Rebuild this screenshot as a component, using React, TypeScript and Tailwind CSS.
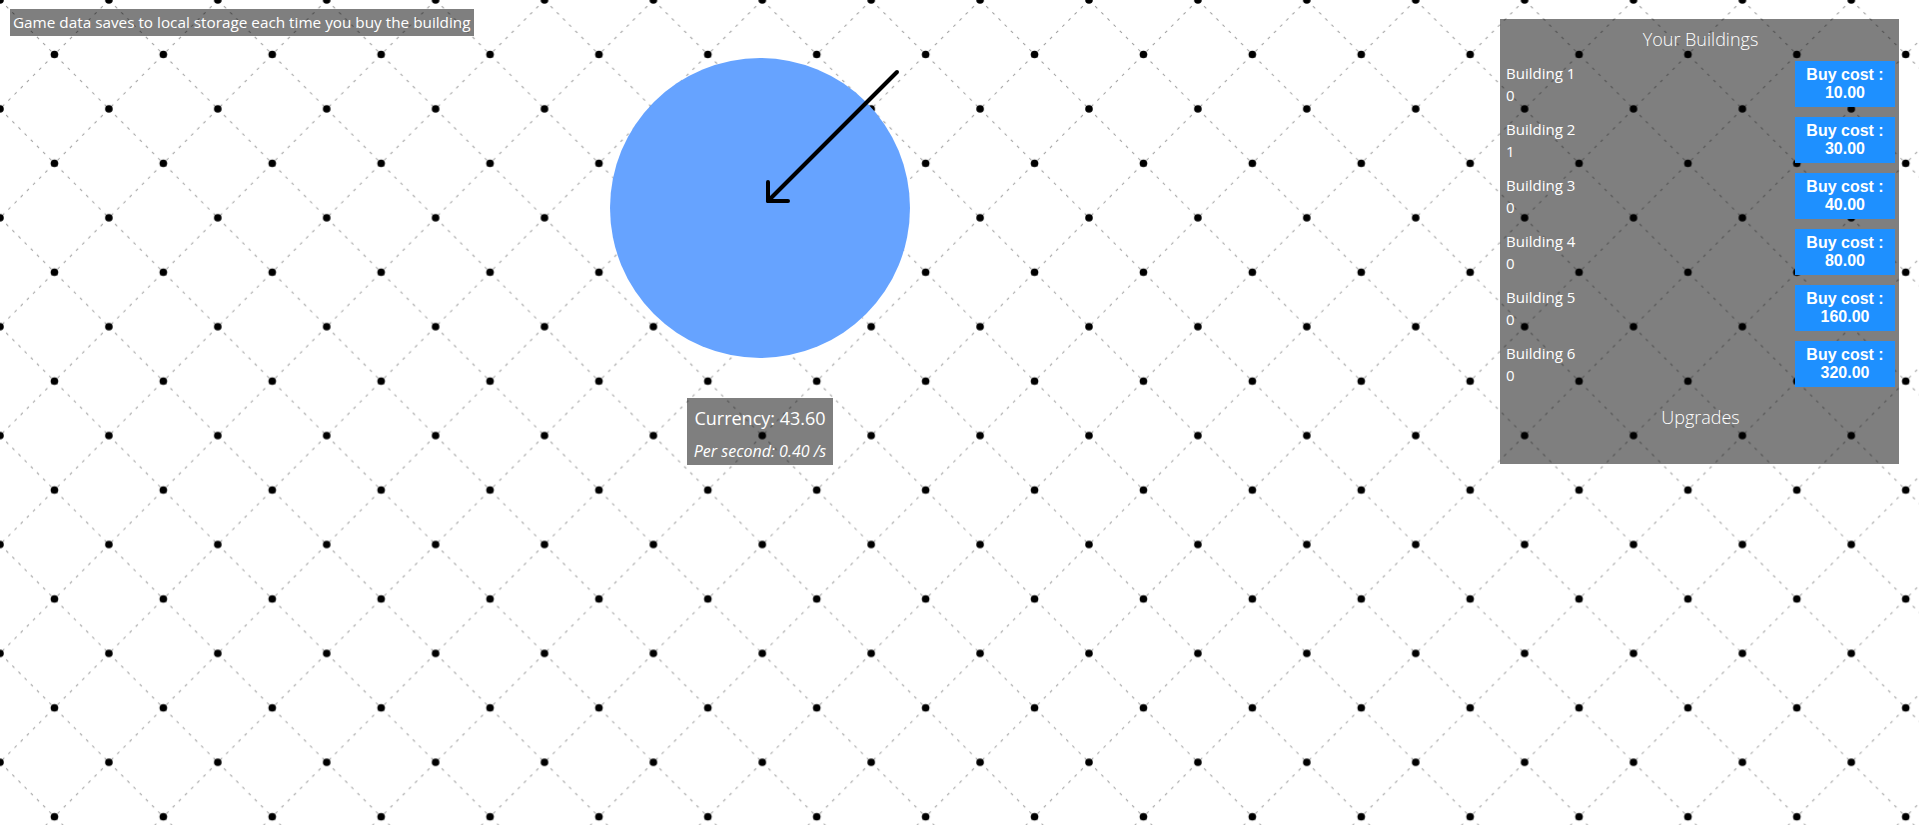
import React from "react";

const buildings = [
  { name: "Building 1", owned: 0, cost: "10.00" },
  { name: "Building 2", owned: 1, cost: "30.00" },
  { name: "Building 3", owned: 0, cost: "40.00" },
  { name: "Building 4", owned: 0, cost: "80.00" },
  { name: "Building 5", owned: 0, cost: "160.00" },
  { name: "Building 6", owned: 0, cost: "320.00" },
];

const Backdrop = () => {
  const p = 108.9;
  const h = p / 2;
  return (
    <svg className="absolute inset-0 h-full w-full" aria-hidden="true">
      <defs>
        <pattern id="lattice" width={p} height={p} patternUnits="userSpaceOnUse">
          <g stroke="#9a9a9a" strokeWidth="1" strokeDasharray="3 5.7">
            <line x1="0" y1="0" x2={p} y2={p} />
            <line x1={p} y1="0" x2="0" y2={p} />
          </g>
          <g fill="#000">
            <circle cx="0" cy="0" r="3.8" />
            <circle cx={p} cy="0" r="3.8" />
            <circle cx="0" cy={p} r="3.8" />
            <circle cx={p} cy={p} r="3.8" />
            <circle cx={h} cy={h} r="3.8" />
          </g>
        </pattern>
      </defs>
      <rect width="100%" height="100%" fill="url(#lattice)" />
    </svg>
  );
};

const Clicker = () => (
  <div className="relative h-[300px] w-[300px] rounded-full bg-[#66a3ff]">
    <svg
      className="absolute left-0 top-0 overflow-visible"
      width="300"
      height="300"
      fill="none"
      stroke="#000"
      strokeWidth="4"
      strokeLinecap="round"
      strokeLinejoin="round"
    >
      <path d="M287 14 158 143" />
      <path d="M158 124V143H178" />
    </svg>
  </div>
);

const BuildingRow = ({ b }: { b: (typeof buildings)[number] }) => (
  <div className="flex h-[46px] items-start justify-between">
    <div className="text-[15px] leading-[22px]">
      <div className="pt-[1px]">{b.name}</div>
      <div>{b.owned}</div>
    </div>
    <button className="flex h-[46px] w-[100px] flex-col items-center justify-center bg-[#1e90ff] font-['Liberation_Sans',Arial,sans-serif] text-[16px] font-bold leading-[18px] text-white">
      <span>Buy cost :</span>
      <span>{b.cost}</span>
    </button>
  </div>
);

export default function App() {
  return (
    <div className="relative min-h-screen w-full overflow-hidden bg-white font-['Open_Sans',sans-serif] text-white">
      <Backdrop />
      <div className="relative flex">
        <div className="flex w-[1500px] flex-col px-[10px] pt-[9px]">
          <div className="self-start bg-black/50 px-[3px] text-[15.3px] leading-[27px]">
            Game data saves to local storage each time you buy the building
          </div>
          <div className="flex flex-col items-center pl-[20px] pt-[22px]">
            <Clicker />
            <div className="mt-[40px] flex h-[67px] w-[146px] flex-col items-center bg-black/50 pt-[6px]">
              <div className="text-[18px] leading-[28px]">Currency: 43.60</div>
              <div className="mt-[5px] text-[16px] italic leading-[28px]">Per second: 0.40 /s</div>
            </div>
          </div>
        </div>
        <div className="mt-[19px] flex h-[445px] w-[399px] flex-col bg-black/50 pl-[6px] pr-[4px] pt-[6px]">
          <div className="text-center text-[18px] font-light leading-[28px]">Your Buildings</div>
          <div className="mt-[8px] flex flex-col gap-[10px]">
            {buildings.map((b) => (
              <BuildingRow key={b.name} b={b} />
            ))}
          </div>
          <div className="mt-[16px] text-center text-[18px] font-light leading-[28px]">Upgrades</div>
        </div>
      </div>
    </div>
  );
}
